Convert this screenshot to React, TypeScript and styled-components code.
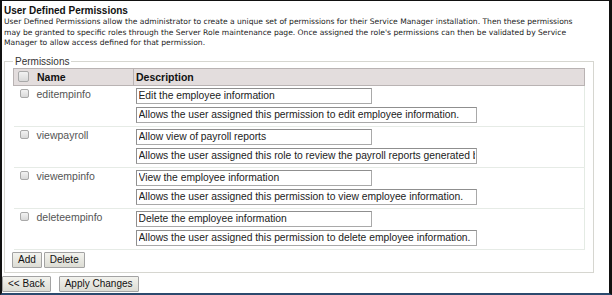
import styled, { createGlobalStyle } from "styled-components";

const GlobalStyle = createGlobalStyle`
  html, body {
    margin: 0;
    padding: 0;
    background: #fff;
  }
  body {
    font-family: "Liberation Sans", Arial, sans-serif;
  }
`;

const Frame = styled.div`
  width: 612px;
  height: 295px;
  box-sizing: border-box;
  border-top: 1px solid #111;
  border-left: 2px solid #111;
  border-right: 3px solid #111;
  border-bottom: 2px solid #2c4a6e;
  display: flex;
  flex-direction: column;
  overflow: hidden;
`;

const Title = styled.h2`
  margin: 4px 0 0 2px;
  font-size: 10px;
  line-height: 12px;
  font-weight: bold;
  color: #111;
`;

const Intro = styled.p`
  margin: 0 0 0 2px;
  font-family: "DejaVu Sans", Verdana, sans-serif;
  font-size: 7.58px;
  line-height: 10.5px;
  color: #222;
  white-space: nowrap;
`;

const Group = styled.fieldset`
  margin: 7px 0 0 2px;
  width: 590px;
  box-sizing: border-box;
  border: 1px solid #d6d6d0;
  padding: 0 7px 4px 8px;
`;

const Legend = styled.legend`
  padding: 0 2px;
  margin-left: 0;
  font-size: 10px;
  line-height: 12px;
  color: #333;
`;

const Table = styled.table`
  width: 572px;
  border-collapse: collapse;
  border-right: 1px solid #e4ebe4;
  table-layout: fixed;
`;

const HeadCell = styled.th<{ $w?: number }>`
  width: ${(p) => (p.$w ? `${p.$w}px` : "auto")};
  height: 16px;
  padding: 0 2px;
  background: #e3dddd;
  border: 1px solid #b9b3b3;
  text-align: left;
  font-size: 10.5px;
  font-weight: bold;
  color: #111;
  vertical-align: middle;
`;

const HeadInner = styled.div`
  display: flex;
  align-items: center;
  gap: 8px;
  padding-left: 2px;
`;

const Row = styled.tr`
  border-bottom: 1px solid #e6ebe6;
`;

const NameCell = styled.td`
  padding: 0;
  vertical-align: top;
`;

const Cell = styled.td`
  padding: 2px 0 3px 2px;
  vertical-align: top;
`;

const NameWrap = styled.div`
  display: flex;
  align-items: center;
  gap: 8px;
  padding: 2px 0 0 6px;
  font-size: 10.5px;
  line-height: 12px;
  color: #555;
`;

const Box = styled.span<{ $size: number }>`
  display: inline-block;
  width: ${(p) => p.$size}px;
  height: ${(p) => p.$size}px;
  box-sizing: border-box;
  border: 1px solid #a9a9a9;
  border-radius: 2px;
  background: linear-gradient(#f2f2f2, #d9d9d9);
  flex: none;
`;

const Fields = styled.div`
  display: flex;
  flex-direction: column;
  gap: 3px;
`;

const Field = styled.input<{ $w: number }>`
  width: ${(p) => p.$w}px;
  height: 16px;
  box-sizing: border-box;
  margin: 0;
  padding: 0 1px 0 2px;
  border: 1px solid #a9a9a9;
  border-top-color: #8f8f8f;
  border-left-color: #8f8f8f;
  font-family: "Liberation Sans", Arial, sans-serif;
  font-size: 10.3px;
  color: #222;
  background: #fff;
  outline: none;
`;

const Buttons = styled.div<{ $top: number; $gap: number; $left: number }>`
  display: flex;
  gap: ${(p) => p.$gap}px;
  margin-top: ${(p) => p.$top}px;
  margin-left: ${(p) => p.$left}px;
`;

const Button = styled.button`
  height: 16px;
  padding: 0 5px;
  border: 1px solid #a3a3a3;
  border-radius: 1px;
  background: linear-gradient(#f3f3ee, #dcdcd4);
  font-family: "Liberation Sans", Arial, sans-serif;
  font-size: 10px;
  line-height: 14px;
  color: #111;
`;

const perms = [
  {
    name: "editempinfo",
    label: "Edit the employee information",
    desc: "Allows the user assigned this permission to edit employee information.",
  },
  {
    name: "viewpayroll",
    label: "Allow view of payroll reports",
    desc: "Allows the user assigned this role to review the payroll reports generated by the system.",
  },
  {
    name: "viewempinfo",
    label: "View the employee information",
    desc: "Allows the user assigned this permission to view employee information.",
  },
  {
    name: "deleteempinfo",
    label: "Delete the employee information",
    desc: "Allows the user assigned this permission to delete employee information.",
  },
];

const App = () => {
  return (
    <>
      <GlobalStyle />
      <Frame>
        <Title>User Defined Permissions</Title>
        <Intro>
          User Defined Permissions allow the administrator to create a unique set of permissions for their Service Manager installation. Then these permissions
          <br />
          may be granted to specific roles through the Server Role maintenance page. Once assigned the role's permissions can then be validated by Service
          <br />
          Manager to allow access defined for that permission.
        </Intro>
        <Group>
          <Legend>Permissions</Legend>
          <Table>
            <thead>
              <tr>
                <HeadCell $w={115}>
                  <HeadInner>
                    <Box $size={11} />
                    Name
                  </HeadInner>
                </HeadCell>
                <HeadCell>Description</HeadCell>
              </tr>
            </thead>
            <tbody>
              {perms.map((p) => (
                <Row key={p.name}>
                  <NameCell>
                    <NameWrap>
                      <Box $size={9} />
                      {p.name}
                    </NameWrap>
                  </NameCell>
                  <Cell>
                    <Fields>
                      <Field $w={236} readOnly value={p.label} />
                      <Field $w={341} readOnly value={p.desc} />
                    </Fields>
                  </Cell>
                </Row>
              ))}
            </tbody>
          </Table>
          <Buttons $top={2} $gap={2} $left={-1}>
            <Button>Add</Button>
            <Button>Delete</Button>
          </Buttons>
        </Group>
        <Buttons $top={3} $gap={8} $left={0}>
          <Button>&lt;&lt; Back</Button>
          <Button>Apply Changes</Button>
        </Buttons>
      </Frame>
    </>
  );
};

export default App;
